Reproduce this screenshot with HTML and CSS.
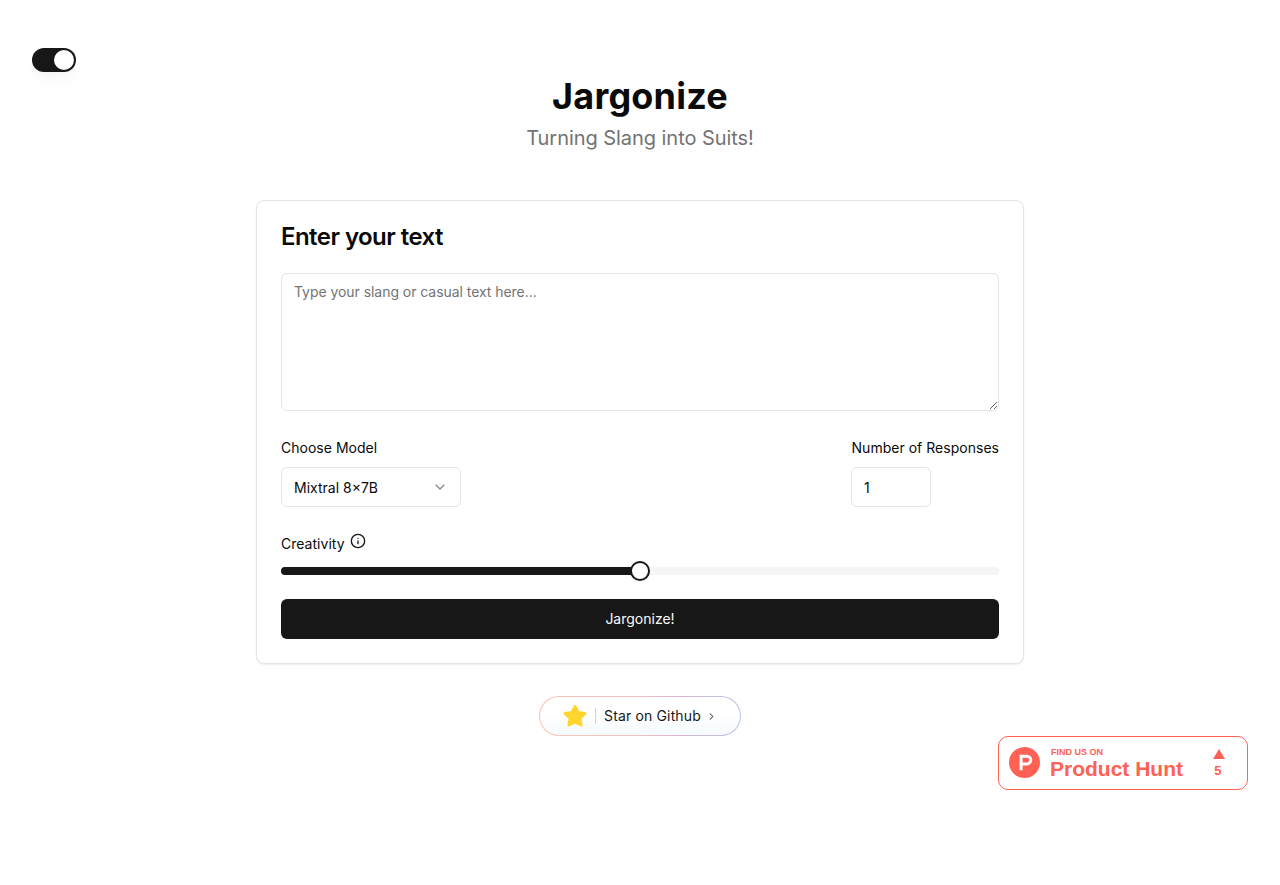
FILE: index.html
```html
<!DOCTYPE html>
<html lang="en">
<head>
<meta charset="utf-8">
<title>Jargonize</title>
<link rel="stylesheet" href="styles.css">
</head>
<body>
<button class="theme-toggle" aria-label="Toggle theme"><span class="theme-thumb"></span></button>
<main class="page">
  <header class="hero">
    <h1 class="hero-title">Jargonize</h1>
    <p class="hero-sub">Turning Slang into Suits!</p>
  </header>
  <section class="card">
    <h2 class="card-title">Enter your text</h2>
    <textarea class="text-input" placeholder="Type your slang or casual text here..."></textarea>
    <div class="options">
      <div class="field">
        <label class="label">Choose Model</label>
        <div class="select">
          <span>Mixtral 8×7B</span>
          <svg class="chevron" viewBox="0 0 24 24" fill="none" stroke="#8a8a8a" stroke-width="2" stroke-linecap="round" stroke-linejoin="round"><path d="m6 9 6 6 6-6"/></svg>
        </div>
      </div>
      <div class="field field-count">
        <label class="label">Number of Responses</label>
        <input class="number" type="text" value="1">
      </div>
    </div>
    <div class="creativity">
      <span class="label">Creativity</span>
      <svg class="info" viewBox="0 0 24 24" fill="none" stroke="#171717" stroke-width="2" stroke-linecap="round" stroke-linejoin="round"><circle cx="12" cy="12" r="10"/><path d="M12 16v-4"/><path d="M12 8h.01"/></svg>
    </div>
    <div class="slider">
      <div class="slider-fill"></div>
      <div class="slider-thumb"></div>
    </div>
    <button class="submit">Jargonize!</button>
  </section>
  <div class="github-row">
    <a class="github">
      <svg class="star" viewBox="0 0 24 24"><path fill="#ffd52e" stroke="#ffd52e" stroke-width="3" stroke-linejoin="round" d="M12 2.500l3 6 6.900 1-5 4.700 1.200 6.800-6.100-3.200-6.100 3.200 1.200-6.800-5-4.700 6.900-1z"/></svg>
      <span class="divider"></span>
      <span class="github-text">Star on Github</span>
      <svg class="arrow" viewBox="0 0 24 24" fill="none" stroke="#404040" stroke-width="2.200" stroke-linecap="round" stroke-linejoin="round"><path d="m9 6 6 6-6 6"/></svg>
    </a>
  </div>
  <div class="ph-row">
    <a class="ph">
      <svg class="ph-logo" viewBox="0 0 32 32"><circle cx="16" cy="16" r="16" fill="#ff6154"/><path fill="#fff" d="M11 8h7.500a5.500 5.500 0 0 1 0 11H14v5h-3zM14 11v5h4.500a2.500 2.500 0 0 0 0-5z"/></svg>
      <span class="ph-text">
        <span class="ph-find">FIND US ON</span>
        <span class="ph-name">Product Hunt</span>
      </span>
      <span class="ph-votes">
        <span class="ph-tri"></span>
        <span class="ph-count">5</span>
      </span>
    </a>
  </div>
</main>
</body>
</html>
```
FILE: styles.css
```css
* { box-sizing: border-box; }
html, body { margin: 0; height: 100%; }
body {
  background: #fff;
  color: #0a0a0a;
  font-family: Inter, "Liberation Sans", sans-serif;
  overflow: hidden;
}
.theme-toggle {
  position: absolute;
  left: 32px;
  top: 48px;
  width: 44px;
  height: 24px;
  padding: 0;
  border: 0;
  border-radius: 12px;
  background: #171717;
  box-shadow: 0 10px 15px -3px rgba(0,0,0,.04), 0 4px 6px -4px rgba(0,0,0,.04);
}
.theme-thumb {
  position: absolute;
  right: 2px;
  top: 2px;
  width: 20px;
  height: 20px;
  border-radius: 50%;
  background: #fff;
}
.page {
  display: flex;
  flex-direction: column;
  align-items: center;
  padding-top: 72px;
}
.hero { text-align: center; margin-bottom: 48px; }
.hero-title {
  margin: 0;
  font-size: 36px;
  line-height: 48px;
  font-weight: 700;
  letter-spacing: 0.2px;
}
.hero-sub {
  margin: 4px 0 0;
  font-size: 20px;
  line-height: 28px;
  color: #737373;
  letter-spacing: -0.05px;
}
.card {
  width: 768px;
  height: 464px;
  padding: 24px;
  border: 1px solid #e5e5e5;
  border-radius: 8px;
  background: #fff;
  box-shadow: 0 1px 2px rgba(0,0,0,.08);
  display: flex;
  flex-direction: column;
}
.card-title {
  margin: 0 0 24px;
  font-size: 24px;
  line-height: 24px;
  font-weight: 600;
  letter-spacing: -0.55px;
}
.text-input {
  display: block;
  width: 100%;
  height: 138px;
  padding: 8px 12px;
  border: 1px solid #e5e5e5;
  border-radius: 6px;
  background: #fff;
  font: 14px/20px Inter, sans-serif;
  letter-spacing: -0.05px;
  color: #0a0a0a;
  outline: none;
}
.text-input::placeholder { color: #737373; opacity: 1; }
.options {
  display: flex;
  justify-content: space-between;
  margin-top: 27px;
}
.field { display: flex; flex-direction: column; }
.field-count { width: 148px; align-items: flex-start; }
.field-count .label { align-self: flex-end; }
.label {
  display: block;
  font-size: 14px;
  line-height: 20px;
  font-weight: 430;
  letter-spacing: 0.02px;
  white-space: nowrap;
}
.field .label { margin-bottom: 9px; }
.select {
  width: 180px;
  height: 40px;
  padding: 0 12px;
  border: 1px solid #e5e5e5;
  border-radius: 6px;
  display: flex;
  align-items: center;
  justify-content: space-between;
  font-size: 14px;
}
.chevron { width: 16px; height: 16px; margin-top: -1px; }
.number {
  width: 80px;
  height: 40px;
  padding: 0 12px;
  border: 1px solid #e5e5e5;
  border-radius: 6px;
  font: 14px Inter, sans-serif;
  color: #0a0a0a;
  outline: none;
}
.creativity {
  display: flex;
  align-items: flex-start;
  gap: 5px;
  margin-top: 27px;
  height: 20px;
}
.info { width: 16px; height: 16px; margin-top: -1px; }
.slider {
  position: relative;
  height: 8px;
  margin-top: 13px;
  border-radius: 4px;
  background: #f5f5f5;
}
.slider-fill {
  width: 50%;
  height: 100%;
  border-radius: 4px 0 0 4px;
  background: #171717;
}
.slider-thumb {
  position: absolute;
  left: 349px;
  top: -6px;
  width: 20px;
  height: 20px;
  border: 2px solid #171717;
  border-radius: 50%;
  background: #fff;
}
.submit {
  margin-top: 24px;
  height: 40px;
  padding: 0 0 2px;
  border: 0;
  border-radius: 6px;
  background: #171717;
  color: #fafafa;
  font: 430 14px Inter, sans-serif;
}
.github-row { margin-top: 32px; }
.github {
  width: 202px;
  height: 40px;
  padding: 0 23px;
  display: flex;
  align-items: center;
  border: 1px solid transparent;
  border-radius: 20px;
  background:
    linear-gradient(180deg, #fff 45%, #f5fafd 100%) padding-box,
    linear-gradient(90deg, #fbc4b8 0%, #f3bfc0 50%, #d9b3d6 70%, #b9c6e0 100%) border-box;
  font-size: 14px;
  font-weight: 440;
  letter-spacing: 0.15px;
  color: #171717;
}
.github-text { white-space: nowrap; padding-bottom: 2px; }
.star { width: 24px; height: 24px; flex: none; }
.divider {
  width: 1px;
  height: 16px;
  margin: 0 8px;
  flex: none;
  background: #d4d4d4;
}
.arrow { width: 11px; height: 11px; margin-left: 5px; flex: none; }
.ph-row {
  width: 100%;
  display: flex;
  justify-content: flex-end;
  padding-right: 32px;
}
.ph {
  width: 250px;
  height: 54px;
  padding: 0 10px;
  display: flex;
  align-items: center;
  border: 1px solid #ff6154;
  border-radius: 10px;
  background: #fff;
  color: #ff6154;
  font-family: "Liberation Sans", Arial, sans-serif;
  font-weight: 700;
}
.ph-logo { width: 31px; height: 31px; flex: none; margin-top: -1px; }
.ph-text {
  display: flex;
  flex-direction: column;
  margin-left: 10px;
  padding-top: 2px;
}
.ph-find { font-size: 9px; line-height: 10px; padding-left: 1px; }
.ph-name { font-size: 21px; line-height: 24px; }
.ph-votes {
  display: flex;
  flex-direction: column;
  align-items: center;
  margin-left: 23px;
  width: 24px;
  padding-top: 1px;
}
.ph-tri {
  width: 0;
  height: 0;
  margin-left: 2px;
  border-left: 6px solid transparent;
  border-right: 6px solid transparent;
  border-bottom: 10px solid #ff6154;
}
.ph-count { font-size: 13px; line-height: 16px; margin-top: 4px; }
```
